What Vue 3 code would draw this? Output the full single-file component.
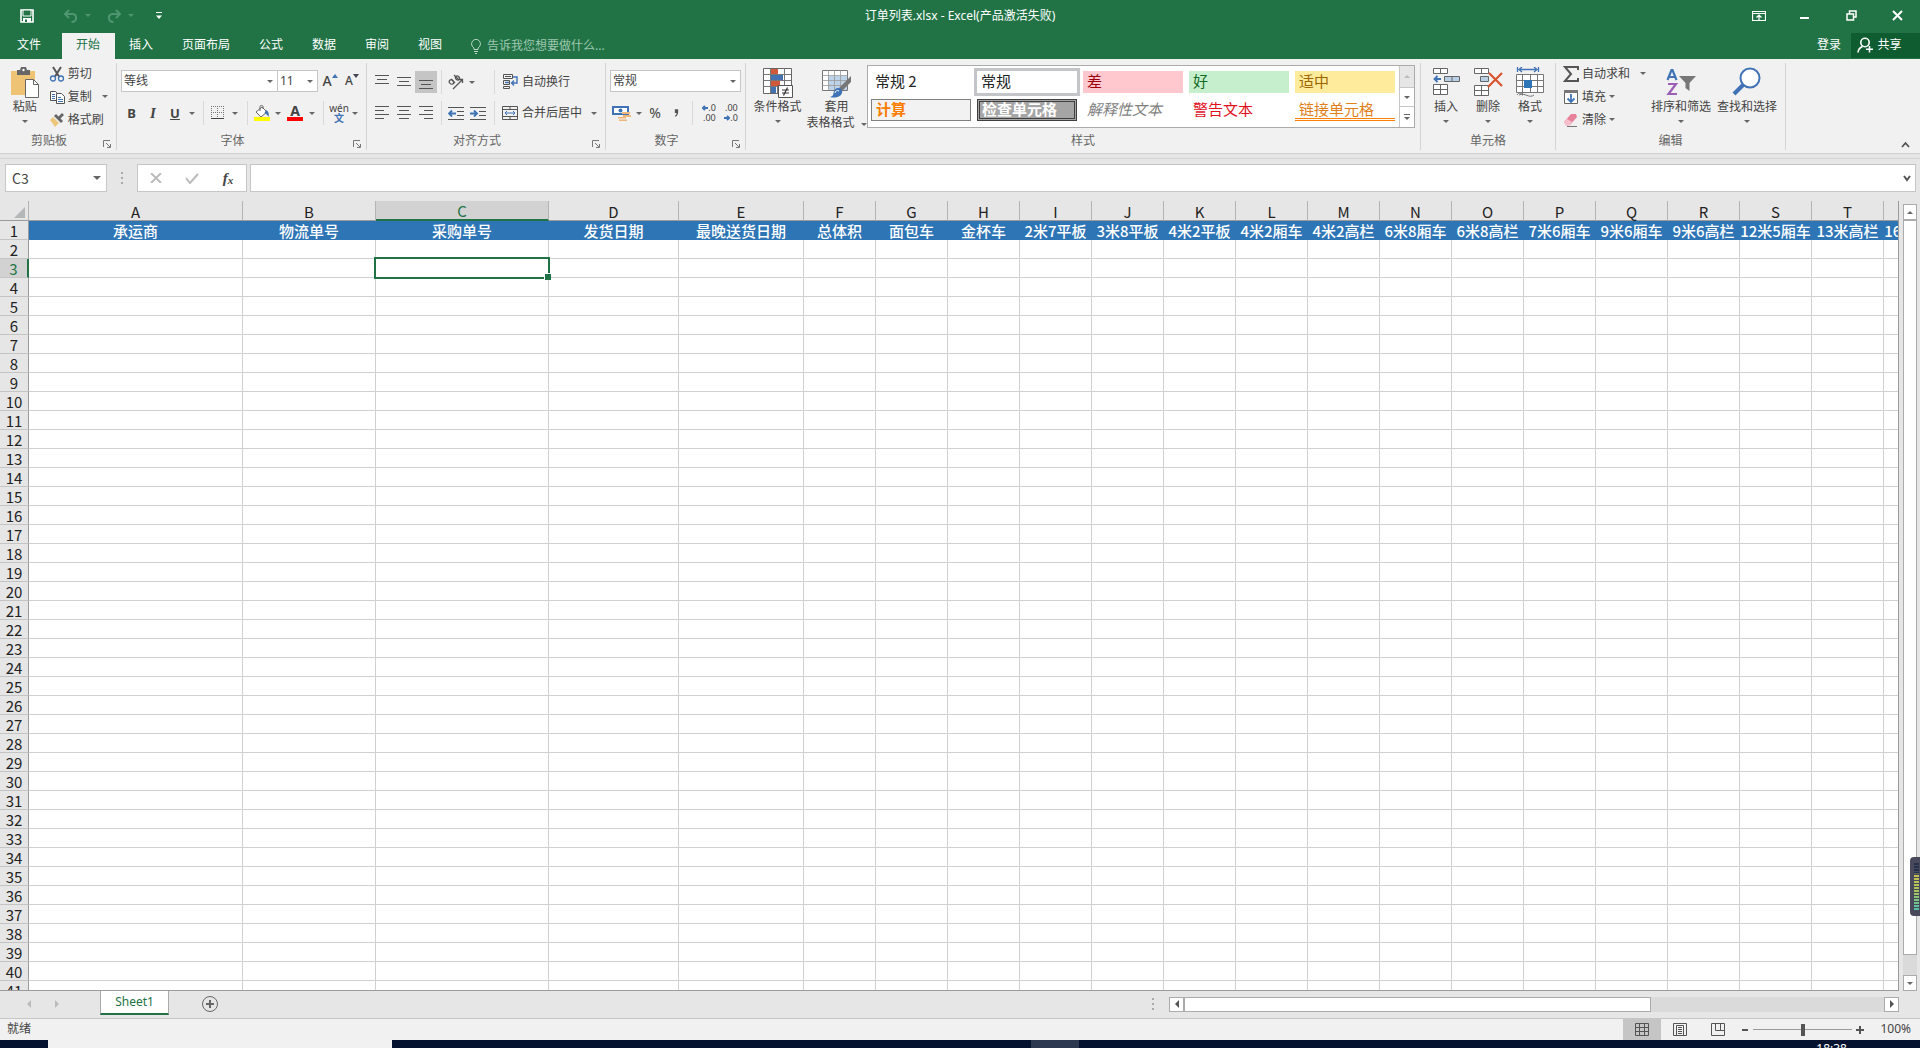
<script setup>
import { ref } from 'vue'

const tabs = ['开始', '插入', '页面布局', '公式', '数据', '审阅', '视图']
const activeTab = ref('开始')
const fontName = ref('等线')
const fontSize = ref('11')
const numberFormat = ref('常规')
const zoom = ref(50)

const styles = [
  { name: '常规 2', kind: 'plain' },
  { name: '常规', kind: 'current' },
  { name: '差', kind: 'bad' },
  { name: '好', kind: 'good' },
  { name: '适中', kind: 'neutral' },
  { name: '计算', kind: 'calc' },
  { name: '检查单元格', kind: 'check' },
  { name: '解释性文本', kind: 'explain' },
  { name: '警告文本', kind: 'warn' },
  { name: '链接单元格', kind: 'link' },
]

const titles = [
  '承运商', '物流单号', '采购单号', '发货日期', '最晚送货日期', '总体积', '面包车', '金杯车',
  '2米7平板', '3米8平板', '4米2平板', '4米2厢车', '4米2高栏', '6米8厢车', '6米8高栏',
  '7米6厢车', '9米6厢车', '9米6高栏', '12米5厢车', '13米高栏', '16米5平板',
]
const wide = [214, 133, 173, 130, 125]
const columns = titles.map((title, i) => ({
  title,
  letter: String.fromCharCode(65 + i),
  width: wide[i] ?? 72,
}))
const gutter = 29
const tableWidth = columns.reduce((sum, c) => sum + c.width, gutter)
const rowNumbers = Array.from({ length: 50 }, (_, i) => i + 2)
</script>

<template>
  <div class="app">
    <header class="titlebar">
      <div class="quick">
        <button class="q save" aria-label="保存">
          <svg width="14" height="14" viewBox="0 0 14 14"><path d="M1 1h12v12H1z" fill="none" stroke="#fff" stroke-width="1.6" /><path d="M3 1h8v6H3z" fill="#217346" stroke="#fff" /><path d="M3 9h8v4H3z" fill="#fff" /><path d="M5 10.500h2V13H5z" fill="#217346" /></svg>
        </button>
        <button class="q undo" aria-label="撤消">
          <svg width="16" height="14" viewBox="0 0 16 14" fill="none" stroke="#4f9670" stroke-width="2"><path d="M6 1 2 5l4 4M2 5h7.500c5 0 5 8-1 8" /></svg>
        </button>
        <i class="caret dim"></i>
        <button class="q redo" aria-label="恢复">
          <svg width="16" height="14" viewBox="0 0 16 14" fill="none" stroke="#4f9670" stroke-width="2"><path d="m10 1 4 4-4 4M14 5H6.500c-5 0-5 8 1 8" /></svg>
        </button>
        <i class="caret dim"></i>
        <button class="q more" aria-label="自定义快速访问工具栏">
          <svg width="8" height="8" viewBox="0 0 8 8"><path d="M1 .5h6" stroke="#fff" /><path d="M1 3.500h6L4 7z" fill="#fff" /></svg>
        </button>
      </div>
      <h1>订单列表.xlsx - Excel(产品激活失败)</h1>
      <div class="window">
        <button aria-label="功能区显示选项"><svg width="14" height="12" viewBox="0 0 14 12" fill="none" stroke="#fff"><path d="M.5 1.500h13v9H.5zM.5 3.500h13M7 10V5M4.500 7.500 7 5l2.500 2.500" stroke-width="1.200" /></svg></button>
        <button aria-label="最小化"><svg width="10" height="12" viewBox="0 0 10 12"><path d="M0 7h9v2H0z" fill="#fff" /></svg></button>
        <button aria-label="还原"><svg width="11" height="11" viewBox="0 0 11 11" fill="none" stroke="#fff" stroke-width="1.500"><path d="M1 4h6.500v6H1zM3.500 4V1H10v6H7.500" /></svg></button>
        <button aria-label="关闭"><svg width="11" height="11" viewBox="0 0 11 11" stroke="#fff" stroke-width="2"><path d="m1 1 9 9M10 1 1 10" /></svg></button>
      </div>
    </header>

    <nav class="tabs">
      <button class="file">文件</button>
      <button v-for="t in tabs" :key="t" :class="{ active: t === activeTab }" @click="activeTab = t">{{ t }}</button>
      <label class="tell">
        <svg width="10" height="15" viewBox="0 0 10 15" fill="none" stroke="#b6d5c2"><path d="M3 10.500V9C1.500 8 .6 6.500.6 4.800a4.400 4.400 0 0 1 8.800 0C9.400 6.500 8.500 8 7 9v1.500zM3 12.500h4M4 14.500h2" /></svg>
        <input type="text" placeholder="告诉我您想要做什么..." aria-label="告诉我您想要做什么" />
      </label>
      <button class="login">登录</button>
      <button class="share">
        <svg width="17" height="16" viewBox="0 0 17 16" fill="none" stroke="#fff" stroke-width="1.600"><circle cx="8" cy="5.500" r="4.200" /><path d="M1 15.500c.3-3 2-5 4.500-6M12.500 9v6.500M9 12.300h7" /></svg>
        共享
      </button>
    </nav>

    <section class="ribbon">
      <div class="group clipboard">
        <div class="body">
          <button class="big paste">
            <svg width="30" height="32" viewBox="0 0 30 32"><path d="M1 4h24v24H1z" fill="#eec373" /><path d="M7 3h3l1-3h5l1 3h3v5H7z" fill="#666" /><circle cx="13.500" cy="3" r="1.200" fill="#fff" /><path d="M15.500 12.500h8l5 5v13h-13z" fill="#fff" stroke="#666" /><path d="M23.500 12.500v5h5" fill="none" stroke="#666" /></svg>
            <span>粘贴</span><i class="caret"></i>
          </button>
          <div class="stack">
            <button><svg width="16" height="16" viewBox="0 0 16 16" fill="none"><path d="M4 1l6 9.500M12 1 6 10.500" stroke="#555" stroke-width="2" /><circle cx="4" cy="12.500" r="2.500" stroke="#3f73b5" stroke-width="1.300" /><circle cx="12" cy="12.500" r="2.500" stroke="#3f73b5" stroke-width="1.300" /></svg>剪切</button>
            <button><svg width="16" height="16" viewBox="0 0 16 16" fill="#fff" stroke="#555"><path d="M1.500 2.500h5l2 2v7h-7z" /><path d="M3 5.500h3M3 7.500h3M3 9.500h3" stroke="#3f73b5" /><path d="M7.500 4.500h5l3 3v7h-8z" /><path d="M9 8.500h3M9 10.500h5M9 12.500h5" stroke="#3f73b5" /></svg>复制<i class="caret"></i></button>
            <button><svg width="16" height="16" viewBox="0 0 16 16"><path d="m1 8 3-3 6 6-4 4z" fill="#edc67d" /><path d="m5 4 2-2 7 7-2 2z" fill="#666" /><path d="m9 5 4-4 2 2-4 4z" fill="#666" /></svg>格式刷</button>
          </div>
        </div>
        <footer><span>剪贴板</span><svg class="launch" viewBox="0 0 8 8"><path d="M.5 7V.5H7M3 3l4 4M7.500 4v3.500H4" /></svg></footer>
      </div>

      <div class="group font">
        <div class="body rows">
          <div class="row r-font">
            <span class="pick"><select v-model="fontName" aria-label="字体"><option>等线</option></select><i class="caret"></i></span>
            <span class="pick size"><select v-model="fontSize" aria-label="字号"><option>11</option></select><i class="caret"></i></span>
            <button class="grow" aria-label="增大字号">A<svg width="6" height="4" viewBox="0 0 6 4"><path d="m0 4 3-4 3 4z" fill="#3f73b5" /></svg></button>
            <button class="grow small" aria-label="减小字号">A<svg width="6" height="4" viewBox="0 0 6 4"><path d="m0 0 3 4 3-4z" fill="#445" /></svg></button>
          </div>
          <div class="row r-style">
            <button class="glyph"><b>B</b></button>
            <button class="glyph serif"><em>I</em></button>
            <button class="glyph"><u>U</u></button>
            <i class="caret"></i>
            <i class="sep"></i>
            <button aria-label="边框"><svg width="14" height="14" viewBox="0 0 14 14" fill="none" stroke="#777"><path d="M.5 0v13M6.500 0v13M12.500 0v13M0 .5h13M0 6.500h13" stroke-dasharray="1 1" /><path d="M0 12.500h13" stroke="#444" /></svg></button>
            <i class="caret"></i>
            <i class="sep"></i>
            <button aria-label="填充颜色"><svg width="18" height="16" viewBox="0 0 18 16"><path d="m3 7 6-5 5 5-6 5z" fill="#fff" stroke="#666" /><path d="M7 6V1.500c0-1.500 3-1.500 3 0V4" fill="none" stroke="#666" /><path d="M13 5c2 1 3.500 3 2.500 7-1-2-2-3-4-4z" fill="#3f73b5" /><path d="M1 12h16v4H1z" fill="#ff0" /></svg></button>
            <i class="caret"></i>
            <button class="fcolor" aria-label="字体颜色">A</button>
            <i class="caret"></i>
            <i class="sep"></i>
            <button class="wen"><span>wén</span><span>文</span></button>
            <i class="caret"></i>
          </div>
        </div>
        <footer><span>字体</span><svg class="launch" viewBox="0 0 8 8"><path d="M.5 7V.5H7M3 3l4 4M7.500 4v3.500H4" /></svg></footer>
      </div>

      <div class="group align">
        <div class="body rows">
          <div class="row r-al1">
            <button class="top" aria-label="顶端对齐"><svg class="ln" viewBox="0 0 14 14"><path d="M0 .5h14M2 4.500h10M0 8.500h14" /></svg></button>
            <button aria-label="垂直居中"><svg class="ln" viewBox="0 0 14 14"><path d="M0 2.500h14M2 6.500h10M0 10.500h14" /></svg></button>
            <button class="on" aria-label="底端对齐"><svg class="ln" viewBox="0 0 14 14"><path d="M0 5.500h14M2 9.500h10M0 13.500h14" /></svg></button>
            <i class="sep"></i>
            <button aria-label="方向"><svg width="16" height="16" viewBox="0 0 16 16" fill="none" stroke="#555" stroke-width="1.300"><path d="M5 15 14.500 5.500M11 5.500h3.500V9" /><ellipse cx="3.500" cy="8" rx="2" ry="2.400" transform="rotate(-45 3.500 8)" /><path d="m3 5 4 4M6 1l5 5" /><ellipse cx="9.500" cy="4" rx="1.800" ry="2.200" transform="rotate(-45 9.500 4)" /></svg></button>
            <i class="caret"></i>
            <i class="sep end"></i>
            <button class="txt"><svg width="16" height="16" viewBox="0 0 16 16" fill="none" stroke="#555"><path d="M1.500.5h9v4h-9zM1.500 6.500h6v4h-6zM1.500 12.500h6v2h-6zM3 2.500h6" /><path d="M3 8.500h4M11 3h4v6h-5M12 6.500 9.500 9l2.500 2.500" stroke="#3f73b5" stroke-width="1.400" /></svg>自动换行</button>
          </div>
          <div class="row r-al2">
            <button aria-label="左对齐"><svg class="ln" viewBox="0 0 14 14"><path d="M0 .5h14M0 4.500h9M0 8.500h14M0 12.500h9" /></svg></button>
            <button aria-label="居中"><svg class="ln" viewBox="0 0 14 14"><path d="M0 .5h14M2 4.500h10M0 8.500h14M2 12.500h10" /></svg></button>
            <button aria-label="右对齐"><svg class="ln" viewBox="0 0 14 14"><path d="M0 .5h14M5 4.500h9M0 8.500h14M5 12.500h9" /></svg></button>
            <i class="sep"></i>
            <button aria-label="减少缩进量"><svg width="16" height="13" viewBox="0 0 16 13" fill="none" stroke="#555"><path d="M0 .5h16M9 4.500h7M9 8.500h7M0 12.500h16" /><path d="M1 6.500h7M4 3.500l-3 3 3 3" stroke="#3f73b5" stroke-width="1.800" /></svg></button>
            <button aria-label="增加缩进量"><svg width="16" height="13" viewBox="0 0 16 13" fill="none" stroke="#555"><path d="M0 .5h16M9 4.500h7M9 8.500h7M0 12.500h16" /><path d="M0 6.500h7M4 3.500l3 3-3 3" stroke="#3f73b5" stroke-width="1.800" /></svg></button>
            <i class="sep end"></i>
            <button class="txt"><svg width="16" height="16" viewBox="0 0 16 16" fill="none" stroke="#555"><path d="M.5 1.500h15v13H.5zM.5 4.500h15M.5 11.500h15M8 1.500v3M8 11.500v3" /><path d="M3 8h10M5 6 3 8l2 2M11 6l2 2-2 2" stroke="#3f73b5" /></svg>合并后居中</button>
            <i class="caret"></i>
          </div>
        </div>
        <footer><span>对齐方式</span><svg class="launch" viewBox="0 0 8 8"><path d="M.5 7V.5H7M3 3l4 4M7.500 4v3.500H4" /></svg></footer>
      </div>

      <div class="group number">
        <div class="body rows">
          <div class="row r-n1"><span class="pick"><select v-model="numberFormat" aria-label="数字格式"><option>常规</option></select><i class="caret"></i></span></div>
          <div class="row r-n2">
            <button aria-label="会计数字格式"><svg width="20" height="17" viewBox="0 0 20 17"><path d="M1 2h15v7H1z" fill="#fff" stroke="#3f73b5" stroke-width="2" /><circle cx="8.500" cy="5.500" r="2" fill="#3f73b5" /><path d="M10 7h8v2h-8zM11 10h8v2h-8zM6 12h8v1.500H6zM7 14.500h8V16H7z" fill="#f0b67a" /></svg></button>
            <i class="caret"></i>
            <button class="pct">%</button>
            <button class="comma" aria-label="千位分隔样式"><svg width="5" height="8" viewBox="0 0 6 9"><path d="M1 0h4v3c0 3-1 5-3.500 6L1 8c1.300-.8 2-2 2-3.500H1z" fill="#555" /></svg></button>
            <i class="sep"></i>
            <button class="dec"><span><svg width="6" height="6" viewBox="0 0 6 6"><path d="M6 3H1M3 1 1 3l2 2" /></svg>.0</span><span>.00</span></button>
            <button class="dec"><span>.00</span><span><svg width="6" height="6" viewBox="0 0 6 6"><path d="M0 3h5M3 1l2 2-2 2" /></svg>.0</span></button>
          </div>
        </div>
        <footer><span>数字</span><svg class="launch" viewBox="0 0 8 8"><path d="M.5 7V.5H7M3 3l4 4M7.500 4v3.500H4" /></svg></footer>
      </div>

      <div class="group stylegroup">
        <div class="body">
          <button class="big cond">
            <svg width="30" height="32" viewBox="0 0 30 32"><path d="M.5 1.500h28v25H.5z" fill="#fff" stroke="#666" /><path d="M.5 7.500h28M.5 13.500h28M.5 19.500h28M7.500 1.500v25M14.500 1.500v25M21.500 1.500v25" stroke="#777" /><path d="M8 2h7v5H8zM8 14h9v5H8z" fill="#d0593c" /><path d="M8 8h12v5H8zM8 20h5v6H8z" fill="#4472b0" /><path d="M15.500 18.500h14v12h-14z" fill="#fff" stroke="#555" /><path d="M19 23h7M19 26h7M24.500 20.500l-4 8" stroke="#333" stroke-width="1.200" /></svg>
            <span>条件格式</span><i class="caret"></i>
          </button>
          <button class="big fmt">
            <svg width="30" height="32" viewBox="0 0 30 32"><path d="M.5 3.500h25v20H.5z" fill="#fff" stroke="#777" /><path d="M6 9h19v14H6z" fill="#bdd3ea" /><path d="M.5 8.500h25M.5 13.500h25M.5 18.500h25M6.500 3.500v20M12.500 3.500v20M18.500 3.500v20" stroke="#999" stroke-width=".8" /><path d="M29 9v6l-9 9-3-3z" fill="#777" /><path d="M16 21c3 0 5 2 4 5-2 5-8 5-12 4 4-1 3-3 4-6 1-2 2-3 4-3z" fill="#3f73b5" /><path d="M13 26c0-2 2-3 4-2" fill="none" stroke="#fff" /></svg>
            <span>套用</span><span class="two">表格格式<i class="caret"></i></span>
          </button>
          <div class="gallery">
            <div class="swatches">
              <button v-for="s in styles" :key="s.name" :class="['swatch', s.kind]"><span>{{ s.name }}</span></button>
            </div>
            <div class="spin">
              <button class="off" aria-label="上一行"><i class="caret up"></i></button>
              <button aria-label="下一行"><i class="caret"></i></button>
              <button class="all" aria-label="其他"><i class="caret"></i></button>
            </div>
          </div>
        </div>
        <footer><span>样式</span></footer>
      </div>

      <div class="group cells">
        <div class="body">
          <button class="big">
            <svg width="28" height="32" viewBox="0 0 28 32" fill="#fff" stroke="#666"><path d="M1.500 1.500h14v5h-14zM8.500 1.500v5M1.500 17.500h14v10h-14zM8.500 17.500v10M1.500 22.500h14" /><path d="M12.500 9.500h15v5h-15z" fill="#b9cfe6" /><path d="M20 9.500v5" /><path d="M2.500 12H9M5.500 9l-3 3 3 3" fill="none" stroke="#3f73b5" stroke-width="1.800" /></svg>
            <span>插入</span><i class="caret"></i>
          </button>
          <button class="big">
            <svg width="30" height="32" viewBox="0 0 30 32" fill="#fff" stroke="#666"><path d="M1.500 1.500h14v5h-14zM8.500 1.500v5M1.500 18.500h14v10h-14zM8.500 18.500v10M1.500 23.500h14" /><path d="M7.500 9.500h8v5h-8z" fill="#b9cfe6" /><path d="m16 6 13 13M29 6 15 20" stroke="#d9532c" stroke-width="2.200" /></svg>
            <span>删除</span><i class="caret"></i>
          </button>
          <button class="big">
            <svg width="30" height="32" viewBox="0 0 30 32" fill="#fff" stroke="#777"><path d="M1.500 7.500h27v18h-27zM1.500 13.500h27M1.500 19.500h27M7.500 7.500v21M15.500 7.500v18M22.500 7.500v18" /><path d="M9 13h8v8H9z" fill="#2e75b6" stroke="none" /><path d="M4 28c6-3 10 4 15 0M2 28c2-3 4-2 6 0" fill="none" /><path d="M2.500 0v5M23.500 0v5M4 2.500h18M7 0 4 2.500 7 5M19 0l3 2.500L19 5" fill="none" stroke="#3f73b5" stroke-width="1.300" /></svg>
            <span>格式</span><i class="caret"></i>
          </button>
        </div>
        <footer><span>单元格</span></footer>
      </div>

      <div class="group edit">
        <div class="body">
          <div class="stack">
            <button><svg width="16" height="16" viewBox="0 0 16 16"><path d="M15 4V1H2l6 7-6 7h13v-3" fill="none" stroke="#555" stroke-width="2" /></svg>自动求和<i class="caret"></i></button>
            <button><svg width="16" height="16" viewBox="0 0 16 16"><path d="M1.500 2.500h13v12h-13z" fill="#fff" stroke="#666" /><path d="M1 1h14v3H1z" fill="#777" /><path d="M8 5v8M4.500 9.500 8 13l3.500-3.500" fill="none" stroke="#3f73b5" stroke-width="1.800" /></svg>填充<i class="caret near"></i></button>
            <button><svg width="16" height="16" viewBox="0 0 16 16"><path d="m1 10 7-8h5l1 3-7 8H3z" fill="#e8829a" /><path d="m1 10 3-3 5 3-3 4H3z" fill="#f5c0cb" /><path d="M4 14.500h10" stroke="#777" /></svg>清除<i class="caret near"></i></button>
          </div>
          <button class="big sort">
            <svg width="32" height="32" viewBox="0 0 32 32" fill="none"><path d="M2.500 13 6.500 3h1l4 10M4 10h6" stroke="#3f73b5" stroke-width="2.200" /><path d="M3 17h8L3.500 27H12" stroke="#9b5fb5" stroke-width="2.200" /><path d="M14 9h17l-6.500 7v8l-4-3v-5z" fill="#777" /></svg>
            <span>排序和筛选</span><i class="caret"></i>
          </button>
          <button class="big find">
            <svg width="30" height="32" viewBox="0 0 30 32" fill="none" stroke="#3f73b5"><circle cx="18" cy="11" r="9.500" fill="#fff" stroke-width="2" /><path d="M11 18 2 27" stroke-width="4" /></svg>
            <span>查找和选择</span><i class="caret"></i>
          </button>
        </div>
        <footer><span>编辑</span></footer>
      </div>
      <button class="collapse" aria-label="折叠功能区"><svg width="9" height="7" viewBox="0 0 9 7"><path d="m1 6 3.500-4L8 6" fill="none" stroke="#555" stroke-width="1.800" /></svg></button>
    </section>

    <section class="formula">
      <label class="namebox"><input type="text" value="C3" aria-label="名称框" /><i class="caret"></i></label>
      <i class="dots"></i>
      <div class="fx">
        <button aria-label="取消"><svg width="12" height="10" viewBox="0 0 12 10"><path d="m1 0 10 10M11 0 1 10" stroke="#bbb" stroke-width="2" /></svg></button>
        <button aria-label="输入"><svg width="14" height="11" viewBox="0 0 14 11"><path d="m1 5 4 5 8-9" fill="none" stroke="#bbb" stroke-width="2" /></svg></button>
        <button class="fn"><em>f</em><em class="x">x</em></button>
      </div>
      <label class="entry"><input type="text" aria-label="编辑栏" /><svg width="8" height="7" viewBox="0 0 8 7"><path d="m1 1 3 4 3-4" fill="none" stroke="#555" stroke-width="2" /></svg></label>
    </section>

    <main class="sheet">
      <div class="viewport">
        <table :style="{ width: tableWidth + 'px' }">
          <colgroup>
            <col :style="{ width: gutter + 'px' }" />
            <col v-for="c in columns" :key="c.letter" :style="{ width: c.width + 'px' }" />
          </colgroup>
          <thead>
            <tr>
              <th class="corner"><svg width="11" height="11" viewBox="0 0 11 11"><path d="M11 0v11H0z" fill="#b4b8b8" /></svg></th>
              <th v-for="c in columns" :key="c.letter" :class="{ sel: c.letter === 'C' }">{{ c.letter }}</th>
            </tr>
          </thead>
          <tbody>
            <tr class="titles">
              <th>1</th>
              <td v-for="c in columns" :key="c.letter">{{ c.title }}</td>
            </tr>
            <tr v-for="n in rowNumbers" :key="n">
              <th :class="{ sel: n === 3 }">{{ n }}</th>
              <td v-for="c in columns" :key="c.letter" :class="{ cursor: n === 3 && c.letter === 'C' }"></td>
            </tr>
          </tbody>
        </table>
      </div>
      <div class="vscroll">
        <button aria-label="向上滚动"><i class="caret up"></i></button>
        <div class="thumb"></div>
        <div class="rest"></div>
        <button aria-label="向下滚动"><i class="caret"></i></button>
      </div>
      <div class="gauge"><i></i></div>
    </main>

    <section class="sheetbar">
      <div class="navs"><i class="tri left"></i><i class="tri right"></i></div>
      <button class="sheettab">Sheet1</button>
      <button class="add" aria-label="新工作表"><svg width="18" height="18" viewBox="0 0 18 18" fill="none" stroke="#666"><circle cx="9" cy="9" r="7.500" /><path d="M5 9h8M9 5v8" stroke-width="2" /></svg></button>
      <i class="dots"></i>
      <div class="hscroll">
        <button aria-label="向左滚动"><i class="tri left"></i></button>
        <div class="thumb"></div>
        <div class="rest"></div>
        <button aria-label="向右滚动"><i class="tri right"></i></button>
      </div>
    </section>

    <footer class="status">
      <span>就绪</span>
      <div class="views">
        <button class="on" aria-label="普通"><svg width="14" height="14" viewBox="0 0 14 14"><path d="M.5.5h13v12H.5zM.5 4.500h13M.5 8.500h13M4.500.5v12M9.500.5v12" /></svg></button>
        <button aria-label="页面布局视图"><svg width="14" height="14" viewBox="0 0 14 14"><path d="M.5.5h13v12H.5zM3.500 2.500h7v10h-7zM5 4.500h4M5 6.500h4M5 8.500h4M5 10.500h4" /></svg></button>
        <button aria-label="分页预览"><svg width="14" height="14" viewBox="0 0 14 14"><path d="M.5.5h13v12H.5zM4.500.5v7M9.500.5v7M4.500 7.500h9" /></svg></button>
      </div>
      <div class="zoom">
        <button aria-label="缩小"><svg width="8" height="8" viewBox="0 0 8 8"><path d="M1 3h6v2H1z" fill="#555" /></svg></button>
        <input v-model="zoom" type="range" min="0" max="100" aria-label="显示比例" />
        <button aria-label="放大"><svg width="8" height="8" viewBox="0 0 8 8"><path d="M3 0h2v3h3v2H5v3H3V5H0V3h3z" fill="#555" /></svg></button>
        <span>100%</span>
      </div>
    </footer>

    <div class="taskbar">
      <i class="search"></i>
      <i class="running"></i>
      <time>18:38</time>
    </div>
  </div>
</template>

<style>
body { margin: 0; overflow: hidden; }
</style>

<style scoped>
* { box-sizing: border-box; }
.app { display: flex; flex-direction: column; height: 100vh; overflow: hidden; background: #e6e6e6; color: #444; font: 12px/16px "Noto Sans", "Noto Sans CJK SC", sans-serif; }
button { margin: 0; padding: 0; border: 0; background: none; color: inherit; font: inherit; white-space: nowrap; display: flex; align-items: center; justify-content: center; }
input, select { margin: 0; padding: 0; border: 0; border-radius: 0; outline: 0; background: none; color: inherit; font: inherit; min-width: 0; appearance: none; }
svg { display: block; flex: none; }
.caret { flex: none; width: 0; height: 0; border: 3px solid transparent; border-top: 3px solid #666; border-bottom: 0; }
.caret.up { border-top: 0; border-bottom: 3px solid #666; }
.caret.dim { border-top-color: #4f9670; }
.tri { width: 0; height: 0; border: 4px solid transparent; }
.tri.left { border-right: 4px solid #555; border-left: 0; }
.tri.right { border-left: 4px solid #555; border-right: 0; }

.titlebar { flex: none; height: 31px; background: #217346; color: #fff; display: grid; grid-template-columns: 1fr auto 1fr; align-items: center; }
.titlebar h1 { margin: 0; font: inherit; }
.quick { display: flex; align-items: center; padding-left: 20px; }
.save { margin-right: 29px; }
.undo, .redo { margin-right: 6px; }
.redo { margin-left: 15px; }
.more { margin-left: 21px; }
.window { display: flex; justify-content: flex-end; }
.window button { width: 46px; height: 31px; }

.tabs { flex: none; height: 28px; background: #217346; color: #fff; display: flex; align-items: stretch; padding-top: 2px; }
.tabs > button { padding: 0 15px 2px 14px; }
.tabs > .file { width: 59px; margin-right: 3px; }
.tabs > .active { background: #f1f1f1; color: #217346; }
.tell { flex: 1; display: flex; align-items: center; gap: 6px; padding-left: 14px; }
.tell input { flex: 1; color: #fff; }
.tell input::placeholder { color: #9fc7b0; opacity: 1; }
.tabs > .login { padding: 0 10px 2px; }
.tabs > .share { width: 69px; gap: 3px; background: #0e5c2f; padding: 0 12px 2px 0; margin-bottom: 1px; }

.ribbon { flex: none; height: 95px; background: #f1f1f1; border-bottom: 1px solid #d0d0d0; display: flex; padding-top: 4px; }
.group { flex: none; display: flex; flex-direction: column; border-right: 1px solid #d4d4d4; margin-bottom: 3px; }
.body { flex: 1; display: flex; min-height: 0; }
.group footer { flex: none; height: 18px; display: flex; align-items: center; color: #666; }
.group footer span { flex: 1; text-align: center; }
.launch { width: 8px; height: 8px; margin: 6px 5px 0 5px; fill: none; stroke: #777; }
.clipboard { width: 117px; }
.font { width: 250px; }
.align { width: 239px; }
.number { width: 140px; }
.stylegroup { width: 675px; }
.cells { width: 135px; }
.edit { width: 230px; }
.collapse { margin: auto 9px 2px auto; width: 12px; height: 14px; }

.big { flex-direction: column; justify-content: flex-start; padding-top: 4px; height: 68px; }
.big span { line-height: 16px; display: flex; align-items: center; }
.big .caret { margin-top: 5px; }
.big .two { gap: 6px; }
.big .two .caret { margin-top: 2px; }
.paste { width: 46px; padding-left: 4px; }
.stack { display: flex; flex-direction: column; width: 71px; }
.stack button { height: 23px; padding: 0 0 2px 3px; justify-content: flex-start; gap: 3px; }
.stack .caret { margin-left: 7px; }
.stack .caret.near { margin-left: 0; }

.rows { flex-direction: column; gap: 9px; padding: 7px 0 0 4px; }
.row { display: grid; height: 22px; align-items: center; justify-items: center; justify-content: start; }
.row > button { height: 22px; }
.rows .row + .row { height: 20px; }
.sep { width: 1px; height: 24px; background: #d9d9d9; }
.sep.end { justify-self: end; }
.r-font { grid-template-columns: 157px 40px 24px 20px; }
.r-style { grid-template-columns: 21px 22px 22px 12px 10px 20px 14px 10px 20px 12px 22px 12px 10px 22px 10px; }
.r-al1 { grid-template-columns: 22px 22px 22px 8px 22px 10px 18px auto; }
.r-al2 { grid-template-columns: 22px 22px 22px 8px 22px 22px 6px auto 24px; }
.r-n1 { grid-template-columns: 131px; }
.r-n2 { grid-template-columns: 24px 10px 22px 20px 12px 22px 22px; }
.pick { position: relative; width: 100%; height: 22px; background: #fff; border: 1px solid #c6c6c6; display: flex; }
.pick.size { border-left: 0; }
.pick select { width: 100%; padding-left: 2px; }
.pick .caret { position: absolute; right: 4px; top: 9px; pointer-events: none; }
.grow { font-size: 14px; font-weight: 500; align-items: center; }
.grow svg { margin: -10px 0 0; }
.grow.small { font-size: 12px; }
.top { align-items: center; }
.glyph { font-size: 13px; width: 20px; }
.glyph u { font-weight: 700; }
.glyph.serif { font-family: "Liberation Serif", serif; font-size: 15px; font-weight: 700; }
.fcolor { font-size: 14px; font-weight: 700; line-height: 14px; width: 16px; }
.row > .fcolor { height: 16px; border-bottom: 4px solid #f00; }
.wen { flex-direction: column; font-size: 10px; line-height: 10px; }
.wen span + span { color: #3f73b5; font-weight: 700; }
.ln { width: 14px; height: 14px; fill: none; stroke: #555; }
.on { background: #c5c5c5; }
.row .on { width: 22px; }
.txt { gap: 4px; padding-left: 7px; }
.pct { font-size: 14px; }
.dec { flex-direction: column; font-size: 9px; line-height: 10px; align-items: flex-end; }
.dec span { display: flex; align-items: center; }
.dec svg { fill: none; stroke: #3f73b5; stroke-width: 2; }

.cond { width: 60px; padding-left: 3px; }
.fmt { width: 61px; }
.gallery { width: 548px; height: 63px; margin-top: 2px; background: #fff; border: 1px solid #ababab; display: flex; }
.swatches { flex: 1; display: grid; grid-template-columns: repeat(5, 100px); grid-template-rows: 22px 22px; gap: 6px; padding: 5px 0 0 3px; font: 15px/20px "Noto Sans CJK SC", sans-serif; }
.swatch { justify-content: flex-start; padding: 0 0 2px 4px; }
.plain, .current { color: #222; }
.current { outline: 3px solid #c3c5c8; outline-offset: 0; }
.bad { background: #ffc7ce; color: #9c0006; }
.good { background: #c6efce; color: #156b1d; }
.neutral { background: #ffeb9c; color: #9c6500; }
.calc { background: #f2f2f2; border: 1px solid #7f7f7f; color: #fa7d00; font-weight: 700; }
.check { background: #a5a5a5; border: 3px double #3f3f3f; color: #fff; font-weight: 700; padding-left: 2px; }
.explain { color: #7f7f7f; font-style: italic; }
.warn { color: #e0101c; }
.link { color: #e0801c; border-bottom: 3px double #ff8001; padding-bottom: 0; }
.spin { width: 15px; border-left: 1px solid #c6c6c6; display: grid; grid-template-rows: 21px 19px 21px; }
.spin button + button { border-top: 1px solid #c6c6c6; }
.spin .off { background: #e6e6e6; }
.spin .off .caret { border-bottom-color: #bbb; }
.spin .all { flex-direction: column; gap: 2px; }
.spin .all::before { content: ""; width: 6px; height: 1px; background: #666; }

.cells .body { padding-left: 4px; }
.cells .big { width: 42px; }
.edit .stack { width: 91px; padding-left: 4px; }
.sort { width: 68px; }
.find { width: 64px; }

.formula { flex: none; height: 47px; display: flex; padding: 10px 4px 9px 5px; background: linear-gradient(#e6e6e6 4px, #d4d4d4 4px, #d4d4d4 5px, #e6e6e6 5px); font-size: 14px; }
.namebox, .entry, .fx { background: #fff; border: 1px solid #c6c6c6; display: flex; align-items: center; }
.namebox { width: 102px; padding: 0 5px 0 6px; font-family: "Noto Sans CJK SC", sans-serif; }
.namebox input, .entry input { flex: 1; }
.namebox .caret { border-width: 4px 4px 0; }
.dots { width: 2px; height: 12px; align-self: center; background: repeating-linear-gradient(#aaa 0 2px, transparent 2px 5px); }
.formula .dots { margin: 0 14px; }
.fx { width: 110px; margin-right: 3px; }
.fx button { flex: 1; }
.fx .fn { font: bold 15px/16px "Liberation Serif", serif; }
.fx .x { font-size: 11px; padding-top: 4px; }
.entry { flex: 1; padding: 0 4px; }

.sheet { flex: 1; min-height: 0; display: flex; position: relative; }
.viewport { flex: 1; min-width: 0; overflow: hidden; background: #fff; border-right: 1px solid #9b9b9b; border-bottom: 1px solid #9b9b9b; }
table { table-layout: fixed; border-collapse: separate; border-spacing: 0; font: 15px/18px "Noto Sans CJK SC", sans-serif; color: #222; }
th, td { padding: 0; height: 19px; border-right: 1px solid #d0d0d0; border-bottom: 1px solid #d0d0d0; text-align: center; white-space: nowrap; }
th { background: #e6e6e6; font-weight: 400; border-bottom-color: #c4c4c4; }
thead th { height: 20px; line-height: 16px; padding-top: 3px; border-right-color: #b4b4b4; border-bottom-color: #9b9b9b; }
tbody th { border-right-color: #9b9b9b; line-height: 17px; padding-top: 1px; }
.corner svg { margin: 0 0 0 14px; }
.titles td { background: #2e75b6; border-color: #2e75b6; color: #fff; font-weight: 500; line-height: 17px; padding-top: 1px; }
.sel { background: #d2d2d2; color: #217346; }
thead .sel { border-bottom: 2px solid #217346; padding-top: 2px; }
tbody .sel { border-right: 2px solid #217346; }
.cursor { position: relative; }
.cursor::before { content: ""; position: absolute; inset: -2px; border: 2px solid #217346; }
.cursor::after { content: ""; position: absolute; right: -3px; bottom: -3px; width: 6px; height: 6px; background: #217346; border: 1px solid #fff; border-width: 1px 0 0 1px; }
.vscroll { flex: none; width: 21px; padding: 3px 3px 0 4px; display: flex; flex-direction: column; }
.vscroll button { height: 16px; background: #fff; border: 1px solid #ababab; }
.vscroll .thumb { flex: 736; background: #fff; border: 1px solid #ababab; }
.vscroll .rest { flex: 20; background: #dadada; }
.gauge { position: absolute; right: 0; bottom: 75px; width: 10px; height: 59px; border-radius: 4px 0 0 4px; background: #484a5c; }
.gauge i { position: absolute; inset: 6px 1px 6px 4px; background: repeating-linear-gradient(transparent 0 2px, #484a5c 2px 3px), linear-gradient(#23314e 22%, #c9c052 23%, #a8c35c 60%, #4fc0a8); }

.sheetbar { flex: none; height: 27px; display: flex; align-items: center; padding-bottom: 1px; }
.navs { width: 100px; display: flex; gap: 24px; padding-left: 27px; }
.navs .left { border-right-color: #bbb; }
.navs .right { border-left-color: #bbb; }
.sheettab { width: 69px; height: 24px; align-self: flex-start; background: #fff; border: 1px solid #ababab; border-top: 0; border-bottom: 2px solid #217346; color: #217346; }
.add { margin: 0 auto 0 32px; }
.sheetbar .dots { margin-right: 15px; }
.hscroll { width: 38%; height: 15px; margin-right: 21px; display: flex; }
.hscroll button { width: 15px; background: #fff; border: 1px solid #ababab; }
.hscroll .thumb { flex: 466; background: #fff; border: 1px solid #ababab; }
.hscroll .rest { flex: 234; background: #dadada; }

.status { flex: none; height: 22px; background: #f1f1f1; border-top: 1px solid #c6c6c6; display: flex; align-items: center; padding: 0 9px 0 7px; }
.status > span, .zoom span { padding-bottom: 2px; }
.views { display: flex; margin-left: auto; height: 21px; }
.views button { width: 38px; }
.views svg { fill: none; stroke: #555; }
.zoom { display: flex; align-items: center; margin-left: 4px; gap: 4px; }
.zoom span { width: 33px; margin-left: 10px; text-align: right; }
.zoom input { width: 99px; height: 16px; background: linear-gradient(#999, #999) center / 100% 1px no-repeat; }
.zoom input::-webkit-slider-thumb { appearance: none; width: 4px; height: 12px; background: #555; }

.taskbar { flex: none; height: 8px; overflow: hidden; background: #04122f; position: relative; display: flex; }
.search { width: 344px; margin-left: 48px; background: #f1f1f1; }
.running { width: 48px; margin-left: 639px; background: #2b3850; }
.taskbar time { margin-left: auto; margin-right: 73px; margin-top: 1px; color: #fff; }
</style>
